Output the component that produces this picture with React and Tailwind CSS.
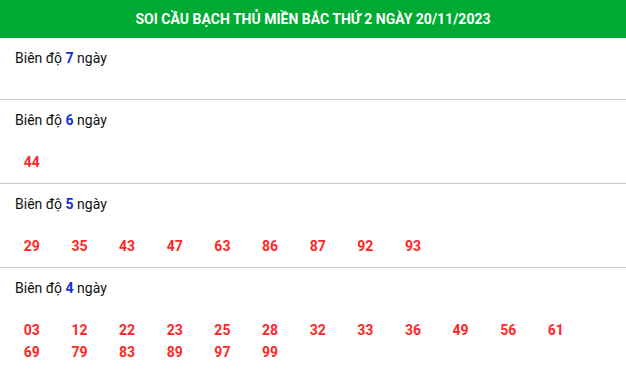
import React from 'react';

const rows = [
  { days: 7, nums: [] },
  { days: 6, nums: ['44'] },
  { days: 5, nums: ['29', '35', '43', '47', '63', '86', '87', '92', '93'] },
  {
    days: 4,
    nums: ['03', '12', '22', '23', '25', '28', '32', '33', '36', '49', '56', '61', '69', '79', '83', '89', '97', '99'],
  },
];

export default function App() {
  return (
    <div className="w-[626px] bg-white font-['Roboto',sans-serif]">
      <div className="h-[38px] bg-[#00aa33] flex items-center justify-center">
        <h1 className="text-[14px] font-bold text-white leading-none">
          SOI CẦU BẠCH THỦ MIỀN BẮC THỨ 2 NGÀY 20/11/2023
        </h1>
      </div>

      {rows.map((row, i) => (
        <div key={row.days} className={`pt-[10px] pb-[10px] ${i < rows.length - 1 ? 'border-b border-[#c8c8c8]' : ''}`}>
          <div className="pl-[15px] text-[14px] leading-[20px] text-[#111]">
            Biên độ <span className="font-bold text-[#1532d6]">{row.days}</span> ngày
          </div>
          <div className="mt-[21px] pl-2 flex flex-wrap w-[590px]">
            {row.nums.map((n) => (
              <div key={n} className="w-[47.65px] text-center text-[14px] leading-[22px] font-bold text-[#ff2626]">
                {n}
              </div>
            ))}
          </div>
        </div>
      ))}
    </div>
  );
}
